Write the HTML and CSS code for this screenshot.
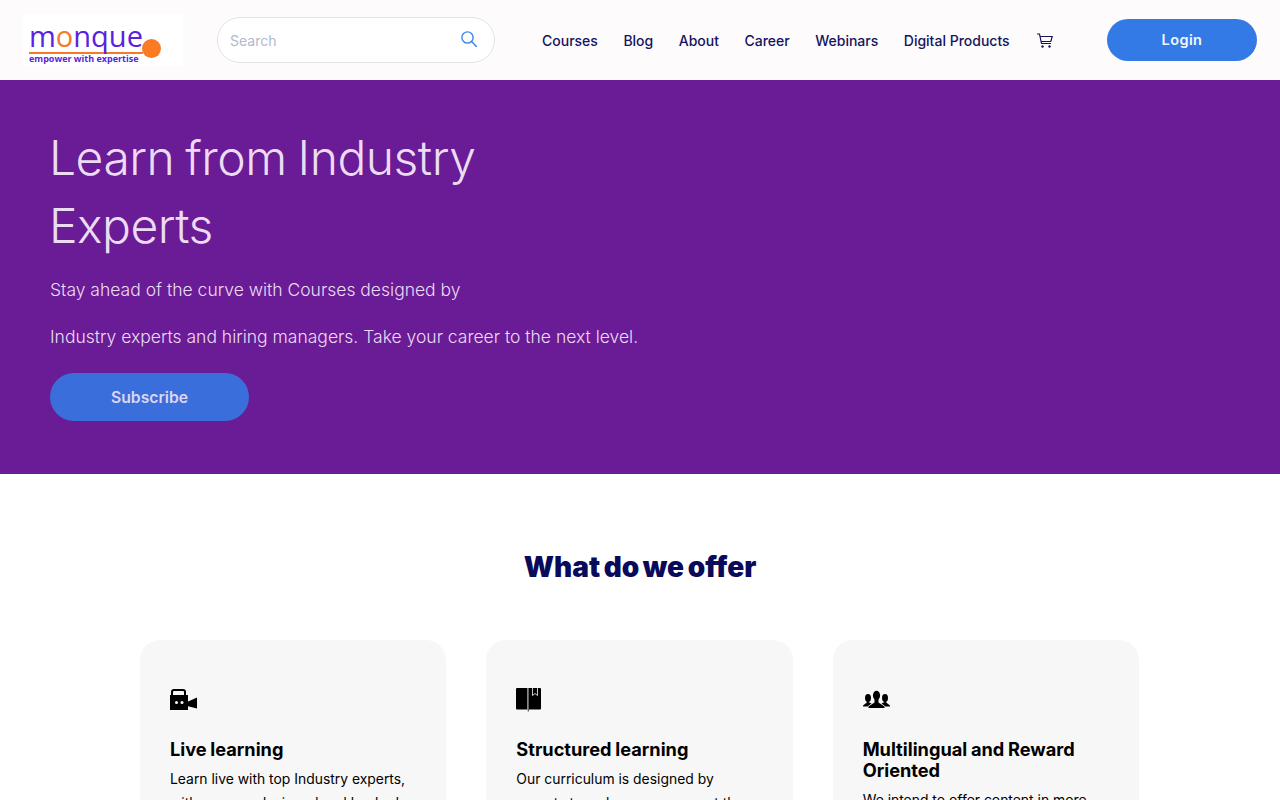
FILE: index.html
```html
<!DOCTYPE html>
<html lang="en">
<head>
<meta charset="UTF-8">
<meta name="viewport" content="width=device-width, initial-scale=1.0">
<title>Monque</title>
<link rel="stylesheet" href="styles.css">
</head>
<body>

<header class="topbar">
  <a class="logo" href="#">
    <span class="logo-word">m<span class="logo-o">o</span>nque</span>
    <span class="logo-tag">empower with expertise</span>
    <span class="logo-dot"></span>
  </a>

  <div class="search">
    <span class="search-text">Search</span>
    <svg class="search-icon" viewBox="0 0 16 16" width="16" height="16" fill="none" stroke="#3d84e8" stroke-width="1.4">
      <circle cx="6.5" cy="6.5" r="5.6"/>
      <path d="M10.6 10.6 15.4 15.6" stroke-linecap="round"/>
    </svg>
  </div>

  <nav class="nav">
    <a href="#">Courses</a>
    <a href="#">Blog</a>
    <a href="#">About</a>
    <a href="#">Career</a>
    <a href="#">Webinars</a>
    <a href="#">Digital Products</a>
    <a href="#" class="cart">
      <svg viewBox="0 0 16 15" width="16" height="15" fill="none" stroke="#14145f" stroke-width="1.2">
        <path d="M0 1h2.500L4.500 10.500h9.500"/>
        <path d="M3 3.500H15.200L13.800 8.500H4"/>
        <circle cx="5.500" cy="13.500" r="1.200" fill="#14145f" stroke="none"/>
        <circle cx="12.500" cy="13.500" r="1.200" fill="#14145f" stroke="none"/>
      </svg>
    </a>
  </nav>

  <a class="login" href="#">Login</a>
</header>

<section class="hero">
  <h1>Learn from Industry<br>Experts</h1>
  <p>Stay ahead of the curve with Courses designed by</p>
  <p>Industry experts and hiring managers. Take your career to the next level.</p>
  <a class="subscribe" href="#">Subscribe</a>
</section>

<section class="offer">
  <h2>What do we offer</h2>
  <div class="cards">
    <div class="card">
      <svg class="card-icon" viewBox="0 0 27 24" width="27" height="24">
        <path d="M2 7V4C2 2.800 2.800 2 4 2h9c1.200 0 2 .8 2 2v3" fill="none" stroke="#000" stroke-width="2"/>
        <path d="M0 7h18v15H0z"/>
        <path d="M17 14 27 9.500v11L17 18z"/>
        <circle cx="6.500" cy="14.500" r="1.500" fill="#f7f7f7"/>
        <circle cx="12" cy="14.500" r="1.500" fill="#f7f7f7"/>
      </svg>
      <h3>Live learning</h3>
      <p>Learn live with top Industry experts, with courses designed and backed by top</p>
    </div>
    <div class="card">
      <svg class="card-icon" viewBox="0 0 25 24" width="25" height="24">
        <path d="M1 0h10.300v21.500H1a1 1 0 0 1-1-1V1a1 1 0 0 1 1-1z"/>
        <path d="M11.800 0v23.500h.8V0z"/>
        <path d="M13 0h11a1 1 0 0 1 1 1v19.500a1 1 0 0 1-1 1H13z"/>
        <path d="M16.500 0v7.500L19 5.500l2.500 2V0" fill="none" stroke="#f7f7f7" stroke-width=".8"/>
      </svg>
      <h3>Structured learning</h3>
      <p>Our curriculum is designed by experts to make sure you meet the</p>
    </div>
    <div class="card">
      <svg class="card-icon" viewBox="0 -1 27 24" width="27" height="24">
        <ellipse cx="13.500" cy="6.500" rx="3.600" ry="4.700"/>
        <path d="M11.500 10v3.500L5.500 17.500v1.500h16v-1.500l-6-4V10z"/>
        <ellipse cx="5" cy="9" rx="3" ry="4"/>
        <path d="M3.800 12v1.500L0 16.500V17.500h4.500l4-3-3-1.500V12z"/>
        <ellipse cx="22" cy="9" rx="3" ry="4"/>
        <path d="M23.200 12v1.500L27 16.500V17.500h-4.500l-4-3 3-1.500V12z"/>
      </svg>
      <h3>Multilingual and Reward Oriented</h3>
      <p>We intend to offer content in more</p>
    </div>
  </div>
</section>

</body>
</html>
```

FILE: styles.css
```css
html, body {
  height: 100%;
  overflow: hidden;
}

body {
  margin: 0;
  padding: 0;
  background: #fff;
  color: #000;
  font-family: Inter, 'Liberation Sans', sans-serif;
}

a {
  text-decoration: none;
}

.topbar {
  height: 80px;
  box-sizing: border-box;
  background: #fdfbfc;
  display: flex;
  align-items: center;
  padding-left: 23px;
}

.logo {
  position: relative;
  width: 160px;
  height: 52px;
  box-sizing: border-box;
  background: #fff;
  display: flex;
  flex-direction: column;
  padding: 6px 0 0 6px;
  margin-right: 34px;
}

.logo-word {
  font-family: 'Open Sans', sans-serif;
  font-weight: 400;
  font-size: 29px;
  line-height: 32px;
  color: #5a22e0;
  height: 34px;
  box-sizing: border-box;
  border-bottom: 2px solid #f47a2c;
  width: 114px;
}

.logo-o {
  color: #f47a2c;
}

/* white behind the tagline hides the tail of the q */
.logo-tag {
  position: relative;
  background: #fff;
  font-family: 'Open Sans', sans-serif;
  font-weight: 700;
  font-size: 9px;
  line-height: 10px;
  color: #5a22e0;
  white-space: nowrap;
}

.logo-dot {
  position: absolute;
  left: 119px;
  top: 25px;
  width: 19px;
  height: 19px;
  border-radius: 50%;
  background: #fb7a24;
}

.search {
  width: 278px;
  height: 46px;
  box-sizing: border-box;
  background: #fff;
  border: 1px solid #e3e3e8;
  border-radius: 23px;
  display: flex;
  align-items: center;
  justify-content: space-between;
  padding: 0 17px 0 12px;
  margin-right: 47px;
}

.search-text {
  font-size: 14px;
  color: #b3b8ce;
  margin-top: 1px;
}

.search-icon {
  margin-top: -3px;
}

.nav {
  display: flex;
  align-items: center;
  gap: 25.500px;
  width: 565px;
}

.nav a {
  font-size: 14px;
  font-weight: 500;
  color: #14145f;
  margin-top: 1px;
  white-space: nowrap;
}

.nav .cart {
  margin-left: 2px;
}

.cart svg {
  display: block;
}

.login {
  width: 150px;
  height: 42px;
  box-sizing: border-box;
  padding-bottom: 2px;
  border-radius: 21px;
  background: #347ae6;
  color: #f2f6fd;
  font-size: 14.500px;
  font-weight: 600;
  letter-spacing: .4px;
  display: flex;
  align-items: center;
  justify-content: center;
}

.hero {
  height: 394px;
  box-sizing: border-box;
  background: #6a1b96;
  padding: 44px 0 0 50px;
  color: #ecdcf3;
}

.hero h1 {
  margin: 0 0 6px -1px;
  font-size: 48px;
  font-weight: 300;
  line-height: 68px;
  letter-spacing: -.5px;
  word-spacing: -2px;
}

.hero p {
  margin: 0;
  font-size: 17.500px;
  font-weight: 300;
  line-height: 47px;
}

.subscribe {
  margin-top: 13px;
  width: 199px;
  height: 48px;
  border-radius: 24px;
  background: #3a6edb;
  color: #dcd6f2;
  font-size: 15.700px;
  font-weight: 600;
  display: flex;
  align-items: center;
  justify-content: center;
}

.offer {
  padding-top: 75px;
}

.offer h2 {
  margin: 0 0 54px;
  text-align: center;
  font-size: 28px;
  font-weight: 900;
  line-height: 37px;
  word-spacing: -2px;
  color: #0a0a5a;
}

.cards {
  display: grid;
  grid-template-columns: repeat(3, 306.330px);
  gap: 40px;
  padding-left: 140px;
}

.card {
  background: #f7f7f7;
  border-radius: 20px;
  padding: 48px 30px 30px;
}

.card-icon {
  display: block;
  margin-bottom: 27px;
}

.card h3 {
  margin: 0 0 7px;
  font-size: 18.200px;
  font-weight: 700;
  line-height: 21px;
  word-spacing: -.6px;
}

.card p {
  margin: 0;
  font-size: 13.900px;
  line-height: 24px;
}
```
